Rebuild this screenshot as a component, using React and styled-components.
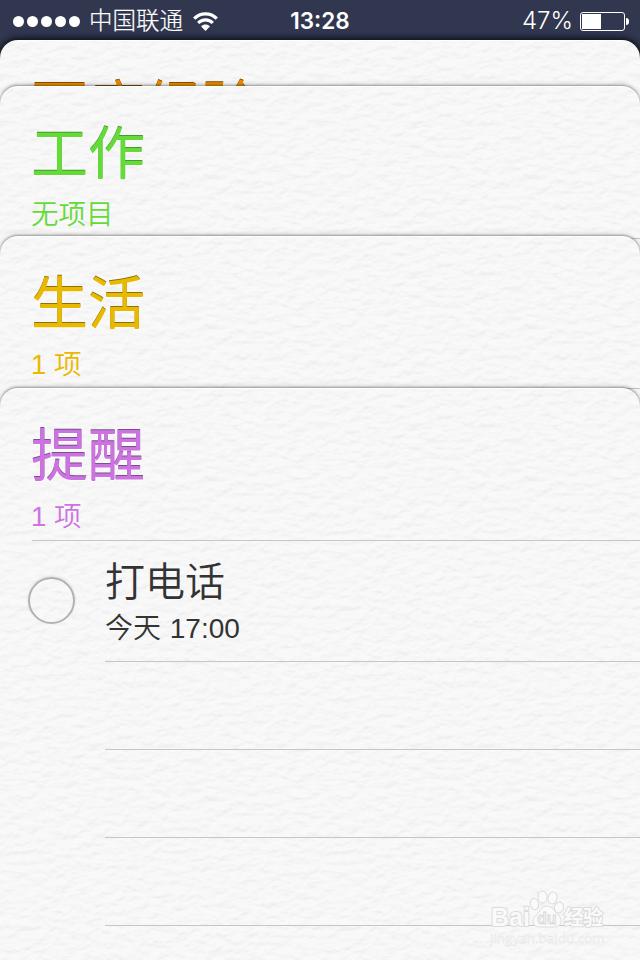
import React from "react";
import styled, { createGlobalStyle } from "styled-components";

const GlobalStyle = createGlobalStyle`
  html, body {
    margin: 0;
    padding: 0;
    background: #30374f;
  }
  * {
    box-sizing: border-box;
  }
`;

// embossed paper grain, tiled on every card
const grain = `<svg xmlns='http://www.w3.org/2000/svg' width='320' height='320'>
<filter id='p' x='0' y='0' width='100%' height='100%' color-interpolation-filters='sRGB'>
<feTurbulence type='fractalNoise' baseFrequency='0.08 0.13' numOctaves='3' seed='8' stitchTiles='stitch'/>
<feColorMatrix type='matrix' values='0 0 0 0 0  0 0 0 0 0  0 0 0 0 0  1 0 0 0 0'/>
<feDiffuseLighting lighting-color='#fff' surfaceScale='1.5' diffuseConstant='1.03'>
<feDistantLight azimuth='255' elevation='66'/>
</feDiffuseLighting>
<feColorMatrix type='matrix' values='0.15 0 0 0 0.828  0 0.15 0 0 0.828  0 0 0.15 0 0.828  0 0 0 0 1'/>
</filter>
<rect width='320' height='320' filter='url(#p)'/>
</svg>`;
const paper = `url("data:image/svg+xml,${encodeURIComponent(grain).replace(/'/g, "%27")}")`;

const Screen = styled.div`
  position: relative;
  width: 640px;
  height: 960px;
  overflow: hidden;
  display: flex;
  flex-direction: column;
  background: #30374f;
  color: #333;
  font-family: "Liberation Sans", "Noto Sans CJK SC", sans-serif;
`;

const StatusBar = styled.div`
  flex: none;
  display: grid;
  grid-template-columns: 1fr auto 1fr;
  align-items: center;
  height: 40px;
  padding: 0 11px 0 13px;
  color: #fff;
  font-size: 24px;
  line-height: 40px;
`;

const Carrier = styled.div`
  display: flex;
  align-items: center;
`;

const Dots = styled.div`
  display: flex;
  gap: 3px;
  margin-right: 9px;
`;

const Dot = styled.span`
  width: 11px;
  height: 11px;
  border-radius: 50%;
  background: #fff;
`;

const CarrierName = styled.span`
  font-weight: 300;
  font-size: 23.5px;
  margin-right: 10px;
  -webkit-text-stroke: 0.2px #fff;
`;

const Time = styled.div`
  margin-right: 2px;
  font-family: Inter, "Liberation Sans", sans-serif;
  font-size: 22.5px;
  font-weight: 600;
  line-height: 42px;
`;

const Power = styled.div`
  display: flex;
  align-items: center;
  justify-content: flex-end;
`;

const Percent = styled.span`
  font-family: Inter, "Liberation Sans", sans-serif;
  font-size: 24px;
  font-weight: 300;
  line-height: 42px;
  margin-right: 7px;
`;

const Battery = styled.div`
  width: 45px;
  height: 19px;
  padding: 1px;
  border: 1px solid #fff;
  border-radius: 3px;
`;

const Charge = styled.div`
  width: 19px;
  height: 15px;
  background: #fff;
`;

const BatteryTip = styled.div`
  width: 3px;
  height: 7px;
  margin-left: 1px;
  border-radius: 0 3px 3px 0;
  background: #fff;
`;

const Card = styled.section`
  flex: none;
  position: relative;
  width: 640px;
  height: ${({ $last }) => ($last ? "572px" : "200px")};
  margin-top: ${({ $pull }) => -$pull}px;
  border-radius: 18px 18px 0 0;
  background: #f7f7f7 ${paper};
  box-shadow: ${({ $first }) =>
    $first
      ? "0 -1px 6px 1px rgba(0, 0, 0, 0.75)"
      : "0 -1px 2px rgba(0, 0, 0, 0.26), 0 -1px 5px rgba(0, 0, 0, 0.24)"},
    inset 0 1px 0 #fff;
`;

const CardHeader = styled.header`
  height: 153px;
  margin-left: 32px;
  padding-top: 31px;
  border-bottom: 1px solid #c6c6c6;
  color: ${({ $color }) => $color};
`;

const Title = styled.h1`
  margin: 0 0 0 -1px;
  font-size: 57px;
  font-weight: 400;
  line-height: 75px;
  text-shadow: 0 -1px 0 ${({ $edge }) => $edge}, 0 1px 1px #fff;
`;

const Count = styled.p`
  margin: 4px 0 0 -1px;
  font-size: 27.5px;
  font-weight: 350;
  line-height: 37px;
`;

const Item = styled.div`
  display: flex;
  height: 121px;
`;

const Check = styled.button`
  flex: none;
  width: 47px;
  height: 47px;
  margin: 36px 30px 0 28px;
  padding: 0;
  border: 2px solid #b2b2b2;
  border-radius: 50%;
  background: transparent;
  box-shadow: 0 -1px 3px rgba(0, 0, 0, 0.1);
`;

const ItemBody = styled.div`
  flex: 1;
  padding-top: 15px;
  border-bottom: 1px solid #c6c6c6;
`;

const ItemTitle = styled.div`
  font-size: 40px;
  font-weight: 350;
  line-height: 52px;
`;

const ItemDate = styled.div`
  font-size: 28px;
  font-weight: 350;
  line-height: 42px;
  word-spacing: 1px;
`;

const EmptyRow = styled.div`
  height: 88px;
  margin-left: 105px;
  border-bottom: 1px solid #c6c6c6;
`;

const Watermark = styled.div`
  position: absolute;
  left: 490px;
  top: 889px;
  width: 116px;
  display: flex;
  flex-direction: column;
`;

const WatermarkUrl = styled.div`
  font: 13.5px/14px "Open Sans", sans-serif;
  white-space: nowrap;
  color: #fbfbfb;
  -webkit-text-stroke: 0.5px #e6e6e6;
`;

const lists = [
  { name: "百度经验", count: "", color: "#ed8e00", edge: "#805000", pull: 0 },
  { name: "工作", count: "无项目", color: "#65db39", edge: "#489a2c", pull: 154 },
  { name: "生活", count: "1 项", color: "#e9b900", edge: "#8d7110", pull: 50 },
  { name: "提醒", count: "1 项", color: "#cc73e1", edge: "#79508a", pull: 48 },
];

const WifiIcon = () => (
  <svg width="25" height="19" viewBox="0 0 25 19" fill="none" stroke="#fff">
    <path d="M1.200 6.700C7.400.2 17.600.2 23.800 6.700" strokeWidth="3.300" />
    <path d="M5.200 11c4-4.200 10.600-4.200 14.600 0" strokeWidth="3.100" />
    <path d="M12.500 19L8.100 14.500c2.400-2.600 6.400-2.600 8.800 0z" fill="#fff" stroke="none" />
  </svg>
);

const BaiduLogo = () => (
  <svg
    width="116"
    height="42"
    viewBox="0 0 116 42"
    fill="#fafafa"
    stroke="#dcdcdc"
    strokeWidth="1"
  >
    <ellipse cx="44.500" cy="15" rx="4" ry="5.700" transform="rotate(-14 44.500 15)" />
    <ellipse cx="52.500" cy="8" rx="4.500" ry="6" />
    <ellipse cx="62.500" cy="9" rx="4.500" ry="6" transform="rotate(12 62.500 9)" />
    <ellipse cx="69" cy="18.500" rx="4.500" ry="5.600" transform="rotate(18 69 18.500)" />
    <path d="M57 17c4 0 6.500 3 8.500 6 2.500 3 6 5 5.500 10-.5 4-4 5-7 5H50c-4 0-7-1.500-7-5.500 0-4.500 4-6.500 6-9.500s4-6 8-6z" />
    <g paintOrder="stroke" strokeWidth="2" strokeLinejoin="round" fontWeight="700">
      <text x="1" y="37" fontFamily="Liberation Sans" fontSize="25" textLength="39">
        Bai
      </text>
      <text x="74" y="36" fontFamily="Noto Sans CJK SC" fontSize="20" textLength="39">
        经验
      </text>
    </g>
    <text
      x="47"
      y="35"
      fontFamily="Liberation Sans"
      fontSize="16"
      fontWeight="700"
      fill="#f0f0f0"
      stroke="#d8d8d8"
      strokeWidth="0.8"
    >
      du
    </text>
  </svg>
);

const App = () => {
  return (
    <>
      <GlobalStyle />
      <Screen>
        <StatusBar>
          <Carrier>
            <Dots>
              {[0, 1, 2, 3, 4].map((n) => (
                <Dot key={n} />
              ))}
            </Dots>
            <CarrierName>中国联通</CarrierName>
            <WifiIcon />
          </Carrier>
          <Time>13:28</Time>
          <Power>
            <Percent>47%</Percent>
            <Battery>
              <Charge />
            </Battery>
            <BatteryTip />
          </Power>
        </StatusBar>

        {lists.map((list, i) => (
          <Card
            key={list.name}
            $first={i === 0}
            $last={i === lists.length - 1}
            $pull={list.pull}
          >
            <CardHeader $color={list.color}>
              <Title $edge={list.edge}>{list.name}</Title>
              <Count>{list.count}</Count>
            </CardHeader>
            {i === lists.length - 1 && (
              <>
                <Item>
                  <Check aria-label="打电话" />
                  <ItemBody>
                    <ItemTitle>打电话</ItemTitle>
                    <ItemDate>今天 17:00</ItemDate>
                  </ItemBody>
                </Item>
                <EmptyRow />
                <EmptyRow />
                <EmptyRow />
              </>
            )}
          </Card>
        ))}

        <Watermark>
          <BaiduLogo />
          <WatermarkUrl>jingyan.baidu.com</WatermarkUrl>
        </Watermark>
      </Screen>
    </>
  );
};

export default App;
